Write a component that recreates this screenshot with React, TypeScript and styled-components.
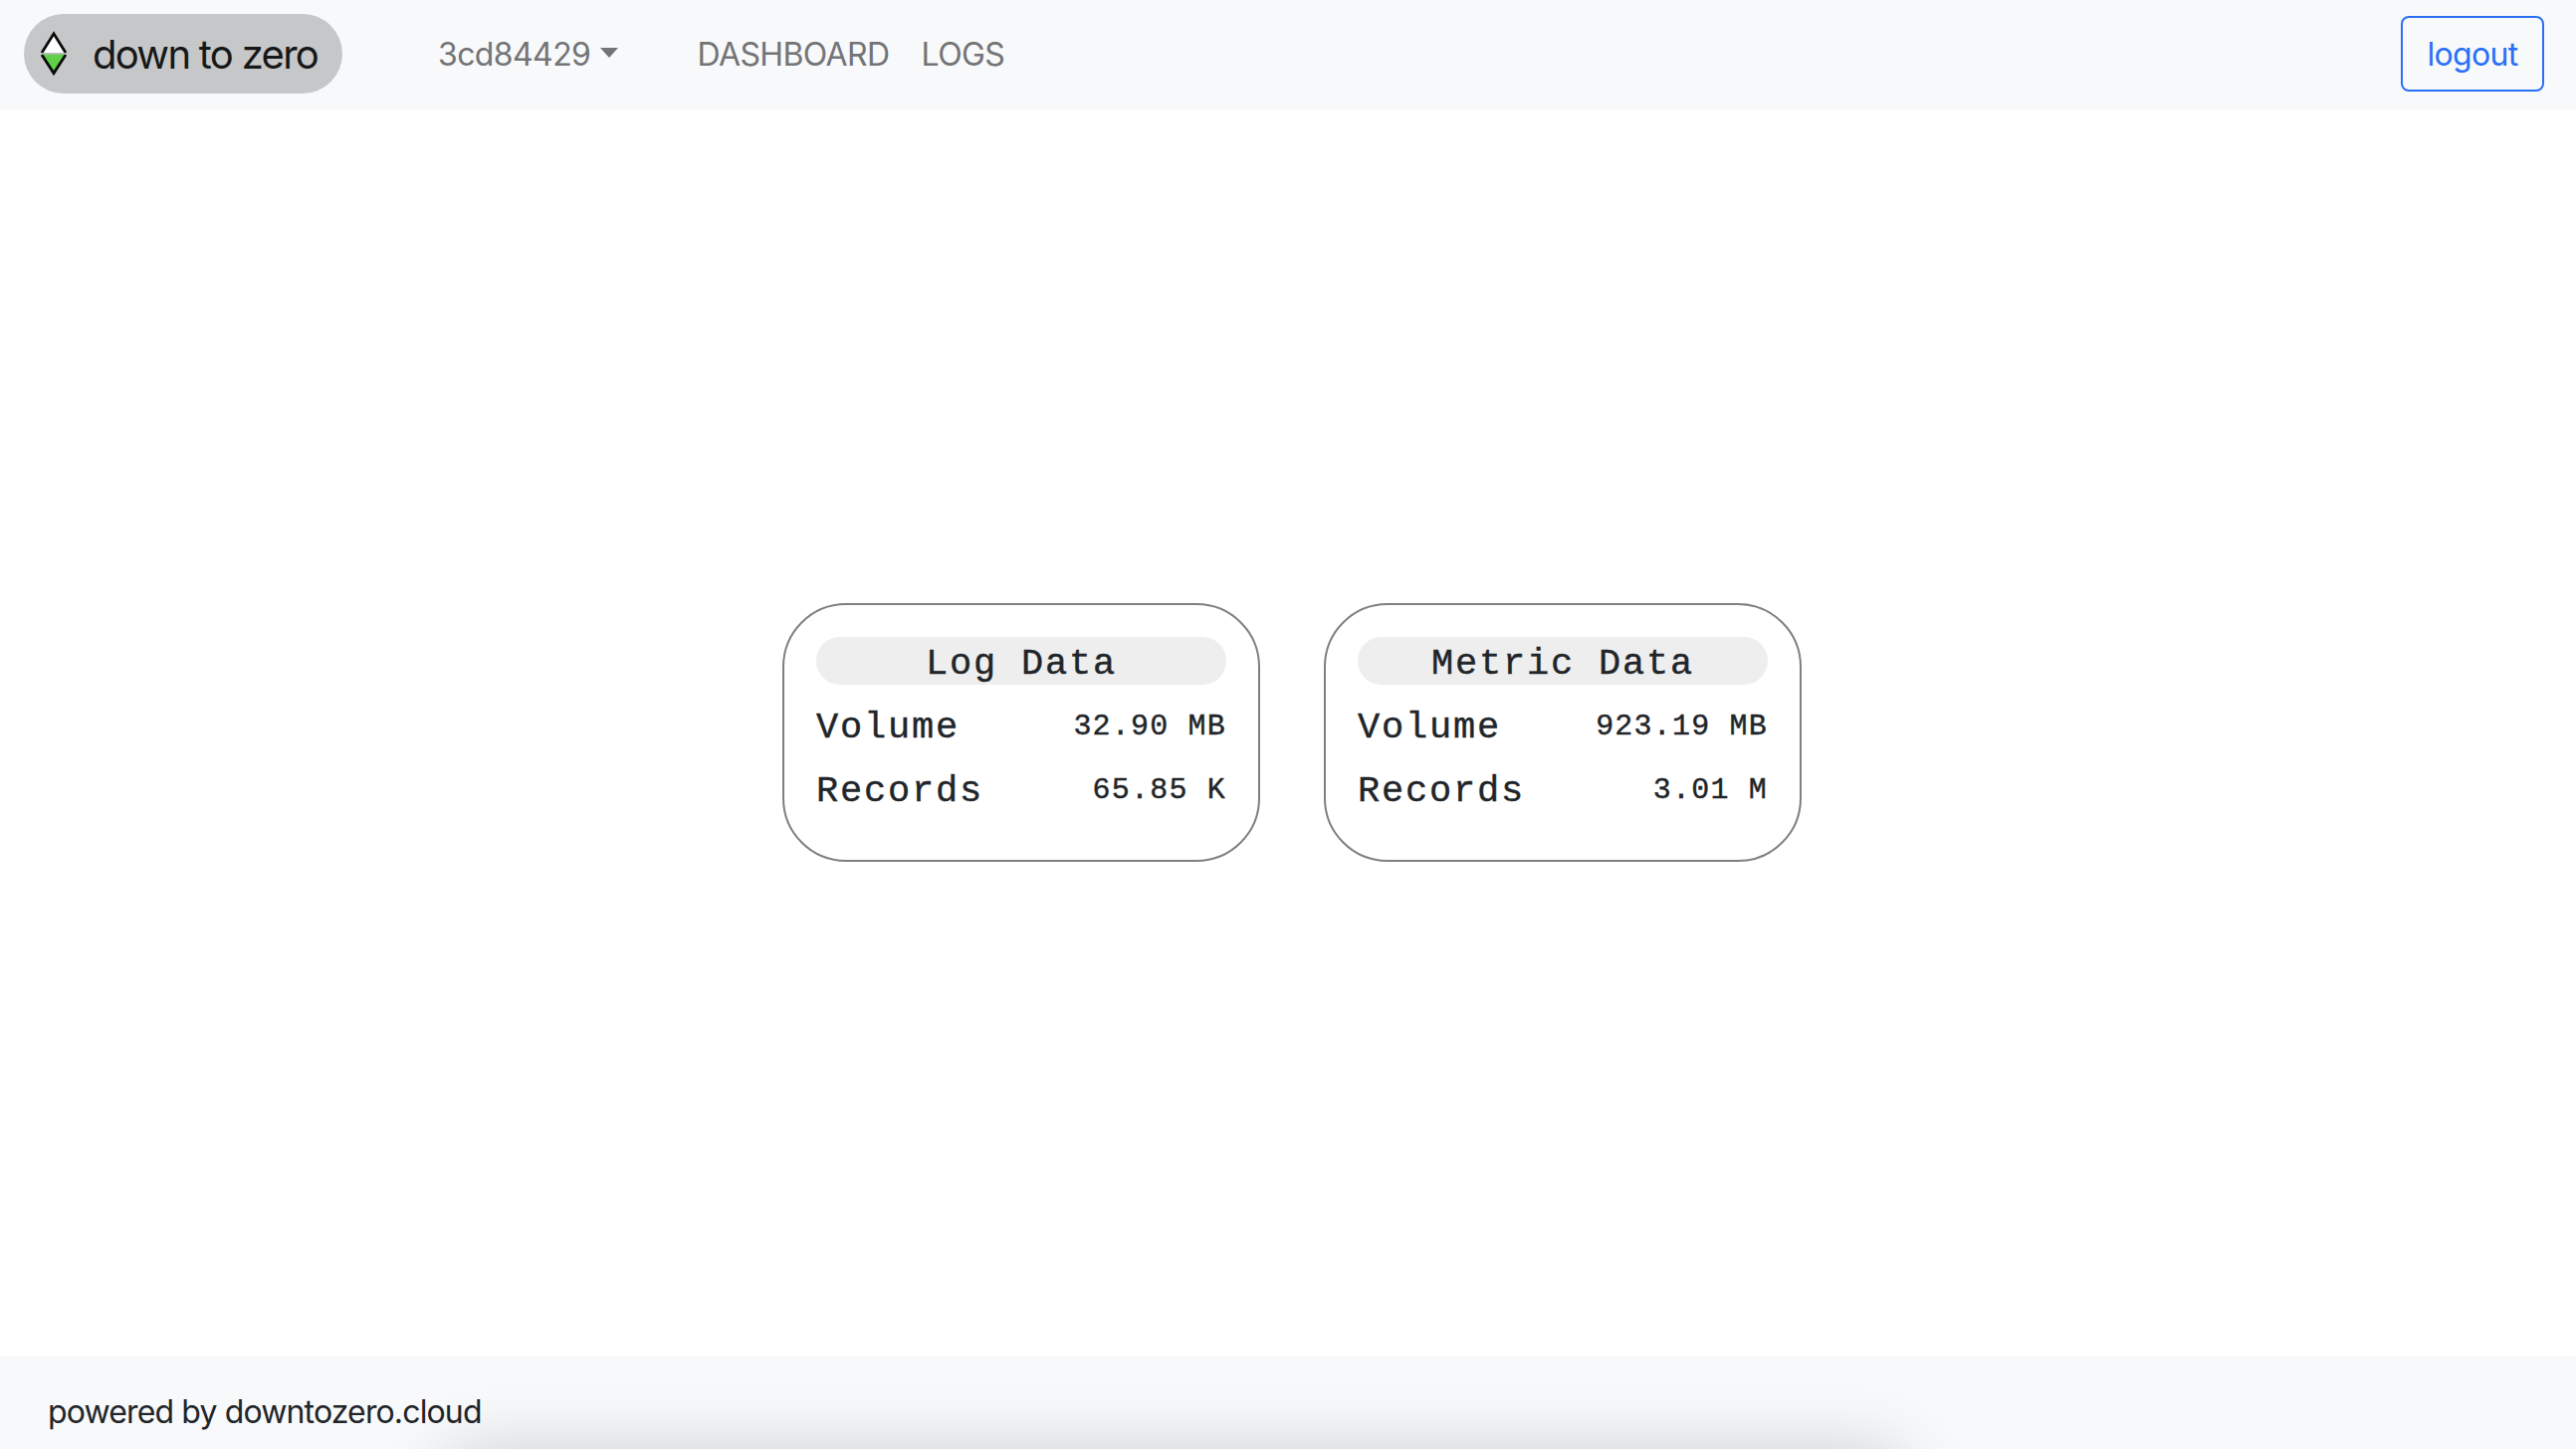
import React from "react";
import styled, { createGlobalStyle } from "styled-components";

const GlobalStyle = createGlobalStyle`
  *, *::before, *::after { box-sizing: border-box; }
  html, body, #root { height: 100%; }
  body {
    margin: 0;
    background: #fff;
    color: #212529;
    font-family: Inter, "Liberation Sans", sans-serif;
    font-size: 32px;
    line-height: 48px;
  }
`;

const Page = styled.div`
  display: flex;
  flex-direction: column;
  height: 100vh;
  overflow: hidden;
`;

const Navbar = styled.header`
  display: flex;
  align-items: center;
  height: 110px;
  padding: 0 32px 2px 24px;
  background: #f8f9fb;
`;

const Brand = styled.a`
  display: flex;
  align-items: center;
  width: 320px;
  height: 80px;
  padding-left: 16px;
  border-radius: 40px;
  background: #c6c7c9;
  color: #161818;
  font-size: 40px;
  letter-spacing: -1.7px;
  white-space: nowrap;
`;

const BrandName = styled.span`
  padding-top: 2px;
`;

const Logo = styled.svg`
  width: 28px;
  height: 46px;
  margin-right: 25px;
`;

const NavLink = styled.a<{ $start: number; $tracking: number }>`
  display: flex;
  align-items: center;
  margin-left: ${(p) => p.$start}px;
  padding-top: 2px;
  color: #737475;
  letter-spacing: ${(p) => p.$tracking}px;
  white-space: nowrap;
`;

const Account = styled(NavLink)`
  width: 181px;
`;

const Caret = styled.span`
  margin: -5px 0 0 auto;
  border-top: 10px solid currentColor;
  border-left: 9.5px solid transparent;
  border-right: 9.5px solid transparent;
`;

const LogoutButton = styled.button`
  width: 144px;
  height: 76px;
  margin-left: auto;
  padding: 2px 0 0;
  border: 2px solid #2970f6;
  border-radius: 8px;
  background: transparent;
  color: #2970f6;
  font: inherit;
  letter-spacing: -0.7px;
`;

const Main = styled.main`
  display: flex;
  flex: 1;
  align-items: center;
  justify-content: center;
  gap: 64px;
  padding-left: 8px;
`;

const Card = styled.section`
  display: flex;
  flex-direction: column;
  gap: 16px;
  width: 480px;
  height: 260px;
  padding: 32px;
  border: 2px solid #808080;
  border-radius: 64px;
  font-family: "Courier New", "Liberation Mono", monospace;
  -webkit-text-stroke: 0.4px currentColor;
`;

const CardTitle = styled.h2`
  height: 48px;
  margin: 0;
  padding-top: 3px;
  border-radius: 24px;
  background: #eee;
  font-size: 37px;
  font-weight: 400;
  letter-spacing: 1.8px;
  line-height: 48px;
  text-align: center;
`;

const Row = styled.div`
  display: flex;
  align-items: center;
  justify-content: space-between;
  height: 48px;
`;

const Label = styled.span`
  padding-top: 5px;
  font-size: 37px;
  letter-spacing: 1.8px;
`;

const Value = styled.span`
  padding-top: 3px;
  font-size: 30px;
  letter-spacing: 1.2px;
`;

const Footer = styled.footer`
  position: relative;
  height: 94px;
  padding: 33px 48px 0;
  overflow: hidden;
  background: #f8f9fb;
  letter-spacing: -0.86px;
`;

const FooterShade = styled.div`
  position: absolute;
  top: 98px;
  left: 446px;
  width: 1468px;
  height: 80px;
  border-radius: 30px;
  box-shadow: 0 0 70px rgba(0, 0, 0, 0.19);
`;

const cards = [
  { title: "Log Data", rows: [["Volume", "32.90 MB"], ["Records", "65.85 K"]] },
  { title: "Metric Data", rows: [["Volume", "923.19 MB"], ["Records", "3.01 M"]] },
];

export default function App() {
  return (
    <Page>
      <GlobalStyle />
      <Navbar>
        <Brand>
          <Logo viewBox="0 0 28 46">
            <path d="M2.2 22.5 14 3.2l11.8 19.3z" fill="#fff" />
            <path d="M2.2 23.5 14 42.2l11.8-18.7z" fill="#60d048" />
            <path d="M2 22 14 2.8 26 22M2 24l12 18.6L26 24" fill="none" stroke="#0a0a0a" strokeWidth="2.8" />
            <path d="M1 22.8h26" stroke="#b5b7b5" strokeWidth="1.4" />
          </Logo>
          <BrandName>down to zero</BrandName>
        </Brand>
        <Account $start={96} $tracking={-0.6}>
          3cd84429
          <Caret />
        </Account>
        <NavLink $start={79.5} $tracking={-0.6}>DASHBOARD</NavLink>
        <NavLink $start={32} $tracking={-0.6}>LOGS</NavLink>
        <LogoutButton>logout</LogoutButton>
      </Navbar>
      <Main>
        {cards.map((card) => (
          <Card key={card.title}>
            <CardTitle>{card.title}</CardTitle>
            {card.rows.map(([label, value]) => (
              <Row key={label}>
                <Label>{label}</Label>
                <Value>{value}</Value>
              </Row>
            ))}
          </Card>
        ))}
      </Main>
      <Footer>
        <FooterShade />
        powered by downtozero.cloud
      </Footer>
    </Page>
  );
}
